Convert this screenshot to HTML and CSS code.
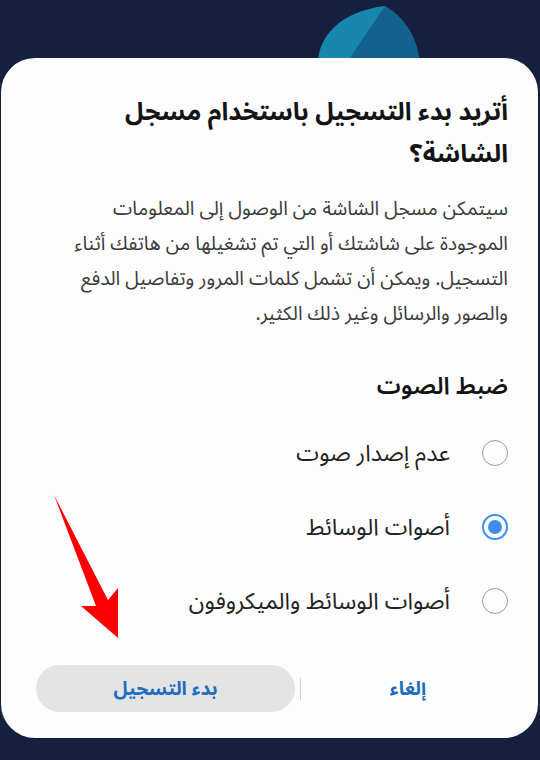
FILE: index.html
```html
<!DOCTYPE html>
<html lang="ar" dir="rtl">
<head>
    <meta charset="UTF-8">
    <meta name="viewport" content="width=device-width, initial-scale=1.0">
    <title>مسجل الشاشة</title>
    <link rel="stylesheet" href="styles.css">
</head>
<body>
    <!-- app logo peeking out behind the dialog -->
    <svg class="app-logo" width="120" height="62" viewBox="0 0 120 62">
        <path d="M8 62 C9 38 28 12 75 6 C96 18 107 38 110 62 Z" fill="#13628d"/>
        <path d="M8 62 C9 38 28 12 75 6 L37 62 Z" fill="#1787ae"/>
    </svg>

    <div class="dialog">
        <h1 class="dialog-title">أتريد بدء التسجيل باستخدام مسجل<br>الشاشة؟</h1>

        <p class="dialog-text">
            سيتمكن مسجل الشاشة من الوصول إلى المعلومات<br>
            الموجودة على شاشتك أو التي تم تشغيلها من هاتفك أثناء<br>
            التسجيل. ويمكن أن تشمل كلمات المرور وتفاصيل الدفع<br>
            والصور والرسائل وغير ذلك الكثير.
        </p>

        <h2 class="section-title">ضبط الصوت</h2>

        <div class="options">
            <label class="option">
                <span class="radio"></span>
                <span class="option-label">عدم إصدار صوت</span>
            </label>
            <label class="option">
                <span class="radio checked"></span>
                <span class="option-label">أصوات الوسائط</span>
            </label>
            <label class="option">
                <span class="radio"></span>
                <span class="option-label">أصوات الوسائط والميكروفون</span>
            </label>
        </div>

        <div class="actions">
            <button class="btn btn-cancel">إلغاء</button>
            <span class="divider"></span>
            <button class="btn btn-start">بدء التسجيل</button>
        </div>
    </div>

    <!-- red pointer arrow -->
    <svg class="pointer" width="540" height="760" viewBox="0 0 540 760">
        <polygon points="54,495 108,600 118,588 118,638 81,606 96,606" fill="#fb0000"/>
    </svg>
</body>
</html>
```

FILE: styles.css
```css
body {
    margin: 0;
    width: 540px;
    height: 760px;
    background: #15203f;
    font-family: "Noto Sans Arabic", "DejaVu Sans", sans-serif;
    position: relative;
    overflow: hidden;
}

.app-logo {
    position: absolute;
    top: 0;
    left: 310px;
}

.dialog {
    position: relative;
    margin: 58px 2px 0 1px;
    height: 680px;
    box-sizing: border-box;
    padding: 33px 30px 0 30px;
    background: #fdfdfd;
    border-radius: 34px;
    display: flex;
    flex-direction: column;
}

.dialog-title {
    margin: 0;
    font-size: 25px;
    line-height: 42px;
    font-weight: bold;
    color: #141414;
}

.dialog-text {
    margin: 16px 0 0;
    font-size: 19.5px;
    line-height: 35px;
    color: #3a3a3a;
}

.section-title {
    margin: 36px 0 0;
    font-size: 24px;
    line-height: 40px;
    font-weight: 600;
    color: #141414;
}

.options {
    margin-top: 9px;
    display: flex;
    flex-direction: column;
}

.option {
    height: 74px;
    display: flex;
    align-items: center;
    gap: 32px;
}

.radio {
    width: 26px;
    height: 26px;
    box-sizing: border-box;
    border: 1.5px solid #9a9a9a;
    border-radius: 50%;
    display: flex;
    align-items: center;
    justify-content: center;
    flex-shrink: 0;
}

.radio.checked {
    border: 2px solid #3d8ef0;
}

.radio.checked::after {
    content: "";
    width: 14px;
    height: 14px;
    border-radius: 50%;
    background: #3d8ef0;
}

.option-label {
    font-size: 23px;
    color: #222;
}

.actions {
    margin: 27px -2px 0 5px;
    display: flex;
    align-items: center;
}

.btn {
    font-family: inherit;
    font-size: 19px;
    font-weight: bold;
    color: #1f6dbf;
    background: none;
    border: none;
    height: 47px;
    padding: 0;
}

.btn-cancel {
    flex: 1;
}

.divider {
    width: 1px;
    height: 22px;
    background: #d2d2d2;
    margin: 0 5px;
}

.btn-start {
    width: 259px;
    border-radius: 24px;
    background: #e4e4e4;
}

.pointer {
    position: absolute;
    top: 0;
    left: 0;
    pointer-events: none;
}
```
